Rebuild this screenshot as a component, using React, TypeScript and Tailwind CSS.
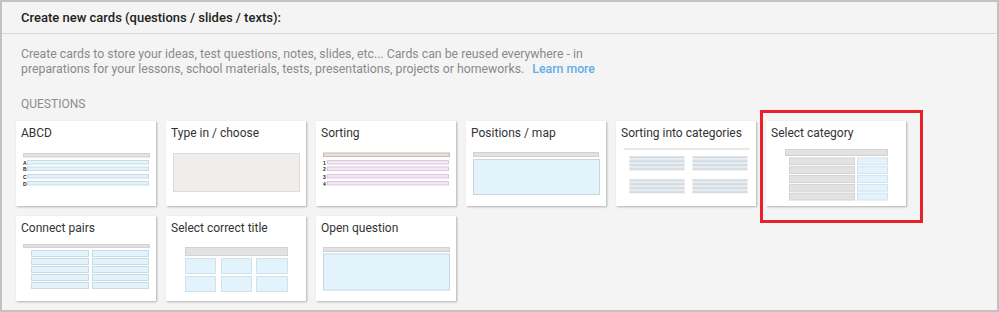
import React from 'react';

const GRAY = { fill: '#e2e2e2', stroke: '#d2d2d2' };
const BLUE = { fill: '#e3f3fc', stroke: '#c9dbe6' };

type Box = { x: number; y: number; w: number; h: number; fill: string; stroke?: string };

const r = (x: number, y: number, w: number, h: number, c: { fill: string; stroke?: string }): Box => ({
  x,
  y,
  w,
  h,
  ...c,
});

const listRows = (c: { fill: string; stroke: string }) =>
  [15, 21.5, 29, 36].map((y) => r(11, y, 122, 4.5, c));

const thumbs: Record<string, { boxes: Box[]; labels?: string[] }> = {
  abcd: {
    boxes: [r(7, 8, 127, 4.5, GRAY), ...listRows(BLUE)],
    labels: ['A', 'B', 'C', 'D'],
  },
  typein: {
    boxes: [r(7, 8, 127, 39, { fill: '#f0edea', stroke: '#dcdcdc' })],
  },
  sorting: {
    boxes: [
      r(7, 7.5, 127, 4.5, { fill: '#e9e1dd', stroke: '#c8bbb5' }),
      ...listRows({ fill: '#f3e6f5', stroke: '#dac8dd' }),
    ],
    labels: ['1', '2', '3', '4'],
  },
  positions: {
    boxes: [r(7, 7, 126, 5, GRAY), r(7, 14, 127, 36, { fill: '#e3f3fc', stroke: '#c6d6df' })],
  },
  categories: {
    boxes: [
      r(7, 3, 127, 2, { fill: '#d2d2d2' }),
      ...[13, 76].flatMap((x) =>
        [11, 34].flatMap((y) => [
          r(x, y, 56, 15, { fill: '#e6ecf0' }),
          ...[0, 4, 8, 12].map((d) => r(x, y + d, 56, 2.2, { fill: '#c9d4db' })),
        ])
      ),
    ],
  },
  selectcat: {
    boxes: [
      r(19, 4, 103, 7, GRAY),
      ...[0, 1, 2, 3, 4].flatMap((i) => [
        r(23, 12.5 + i * 8.8, 66, 7.8, GRAY),
        r(91, 12.5 + i * 8.8, 31, 7.8, { fill: '#e3f3fc', stroke: '#d2e3ec' }),
      ]),
    ],
  },
  pairs: {
    boxes: [
      r(7, 4, 127, 4, GRAY),
      ...[0, 1, 2, 3, 4].flatMap((i) => [
        r(15, 10 + i * 8, 58, 7, BLUE),
        r(76, 10 + i * 8, 57, 7, BLUE),
      ]),
    ],
  },
  title: {
    boxes: [
      r(19, 7, 103, 9, GRAY),
      ...[18, 36].flatMap((y) =>
        [
          [19, 31],
          [55, 31],
          [90, 32],
        ].map(([x, w]) => r(x, y, w, 16, { fill: '#e3f3fc', stroke: '#d0e2ec' }))
      ),
    ],
  },
  open: {
    boxes: [r(7, 7, 127, 5, GRAY), r(7, 13.5, 127, 37, { fill: '#e3f3fc', stroke: '#c6d6df' })],
  },
};

const Thumb = ({ kind }: { kind: string }) => {
  const t = thumbs[kind];
  return (
    <svg width="140" height="61" viewBox="0 0 140 61">
      {t.boxes.map((b, i) => (
        <rect
          key={i}
          x={b.x + 0.5}
          y={b.y + 0.5}
          width={b.w - 1}
          height={b.h - 1}
          fill={b.fill}
          stroke={b.stroke ?? 'none'}
          strokeWidth={b.stroke ? 1 : 0}
        />
      ))}
      {t.labels?.map((l, i) => (
        <text
          key={l}
          x={7}
          y={[15, 21.5, 29, 36][i] + 4.5}
          fontSize="5"
          fontWeight="bold"
          fontFamily="Arial, sans-serif"
          fill="#222"
        >
          {l}
        </text>
      ))}
    </svg>
  );
};

const cards = [
  { label: 'ABCD', kind: 'abcd' },
  { label: 'Type in / choose', kind: 'typein' },
  { label: 'Sorting', kind: 'sorting' },
  { label: 'Positions / map', kind: 'positions' },
  { label: 'Sorting into categories', kind: 'categories' },
  { label: 'Select category', kind: 'selectcat' },
  { label: 'Connect pairs', kind: 'pairs' },
  { label: 'Select correct title', kind: 'title' },
  { label: 'Open question', kind: 'open' },
];

export default function App() {
  return (
    <div
      className="relative w-[999px] h-[312px] border-2 border-[#c2c2c2] bg-[#f4f4f4] overflow-hidden"
      style={{ fontFamily: 'Roboto, "Liberation Sans", sans-serif' }}
    >
      {/* Header */}
      <div className="h-[32px] flex items-center px-[19px] border-b border-[#d9d9d9] text-[13px] font-medium text-[#222]">
        Create new cards (questions / slides / texts):
      </div>

      {/* Description */}
      <p className="px-[19px] pt-[13px] text-[12.3px] leading-[15px] text-[#8a8a8a] whitespace-nowrap">
        Create cards to store your ideas, test questions, notes, slides, etc... Cards can be reused everywhere - in
        <br />
        preparations for your lessons, school materials, tests, presentations, projects or homeworks.
        <a className="ml-[8px] font-medium text-[#62aee8]" href="#">
          Learn more
        </a>
      </p>

      <div className="px-[19px] mt-[20px] text-[12px] leading-[14px] text-[#8c8c8c] uppercase">Questions</div>

      {/* Cards */}
      <div className="pl-[14px] pt-[10px] flex flex-wrap gap-[10px] w-[920px]">
        {cards.map((c) => (
          <div key={c.kind} className="w-[140px] h-[85px] bg-white shadow-[1px_1px_2px_rgba(0,0,0,0.28)]">
            <div className="h-[24px] pt-[4px] px-[5px] text-[12px] leading-[16px] text-[#333]">{c.label}</div>
            <Thumb kind={c.kind} />
          </div>
        ))}
      </div>

      {/* Highlight */}
      <div className="absolute left-[758px] top-[108px] w-[163px] h-[113px] border-[3px] border-[#e8202a]" />
    </div>
  );
}
